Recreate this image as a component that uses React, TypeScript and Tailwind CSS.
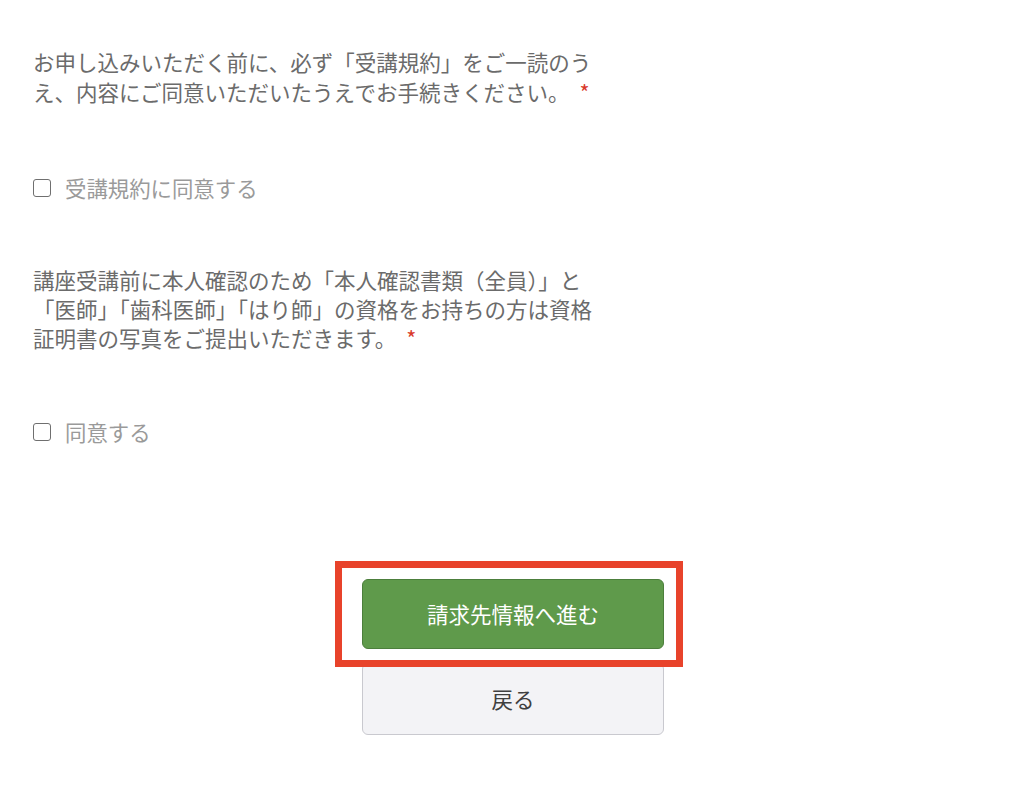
import React from "react";

const font = { fontFamily: '"Noto Sans CJK JP", "Noto Sans", sans-serif' };

function Required() {
  return <span className="ml-[10px] text-[#d93a2b]">*</span>;
}

function CheckRow({ label }: { label: string }) {
  return (
    <label className="flex h-[30px] items-center gap-[14px]">
      <span className="h-[18px] w-[18px] rounded-[3px] border-[1.5px] border-[#6f6f6f] bg-white" />
      <span className="text-[21.4px] text-[#9a9a9a]">{label}</span>
    </label>
  );
}

export default function App() {
  return (
    <div className="min-h-[802px] w-[1024px] bg-white" style={font}>
      <div className="pl-[33px] pt-[47px]">
        <p className="w-[566px] text-[21.5px] leading-[30px] text-[#6b6b6b]">
          お申し込みいただく前に、必ず「受講規約」をご一読のうえ、内容にご同意いただいたうえでお手続きください。
          <Required />
        </p>

        <div className="mt-[66px]">
          <CheckRow label="受講規約に同意する" />
        </div>

        <p className="mt-[62px] w-[566px] text-[21.5px] leading-[29px] text-[#6b6b6b]">
          講座受講前に本人確認のため「本人確認書類（全員）」と「医師」「歯科医師」「はり師」の資格をお持ちの方は資格証明書の写真をご提出いただきます。
          <Required />
        </p>

        <div className="mt-[65px]">
          <CheckRow label="同意する" />
        </div>
      </div>

      <div className="mt-[132px] flex flex-col items-center gap-[14px]">
        <div className="relative ml-[2px]">
          <button className="box-border flex h-[70px] w-[302px] items-center justify-center rounded-[6px] border border-[#4c7f3c] bg-[#5f9a4b] text-[21.5px] text-white">
            請求先情報へ進む
          </button>
          {/* annotation frame */}
          <div className="pointer-events-none absolute -bottom-[18px] -left-[27px] -right-[19px] -top-[18px] border-[7px] border-[#e8432b]" />
        </div>
        <button className="box-border ml-[2px] flex h-[72px] w-[302px] items-center justify-center rounded-[6px] border border-[#c9c9cf] bg-[#f3f3f6] text-[21.5px] text-[#3f3f3f]">
          戻る
        </button>
      </div>
    </div>
  );
}
